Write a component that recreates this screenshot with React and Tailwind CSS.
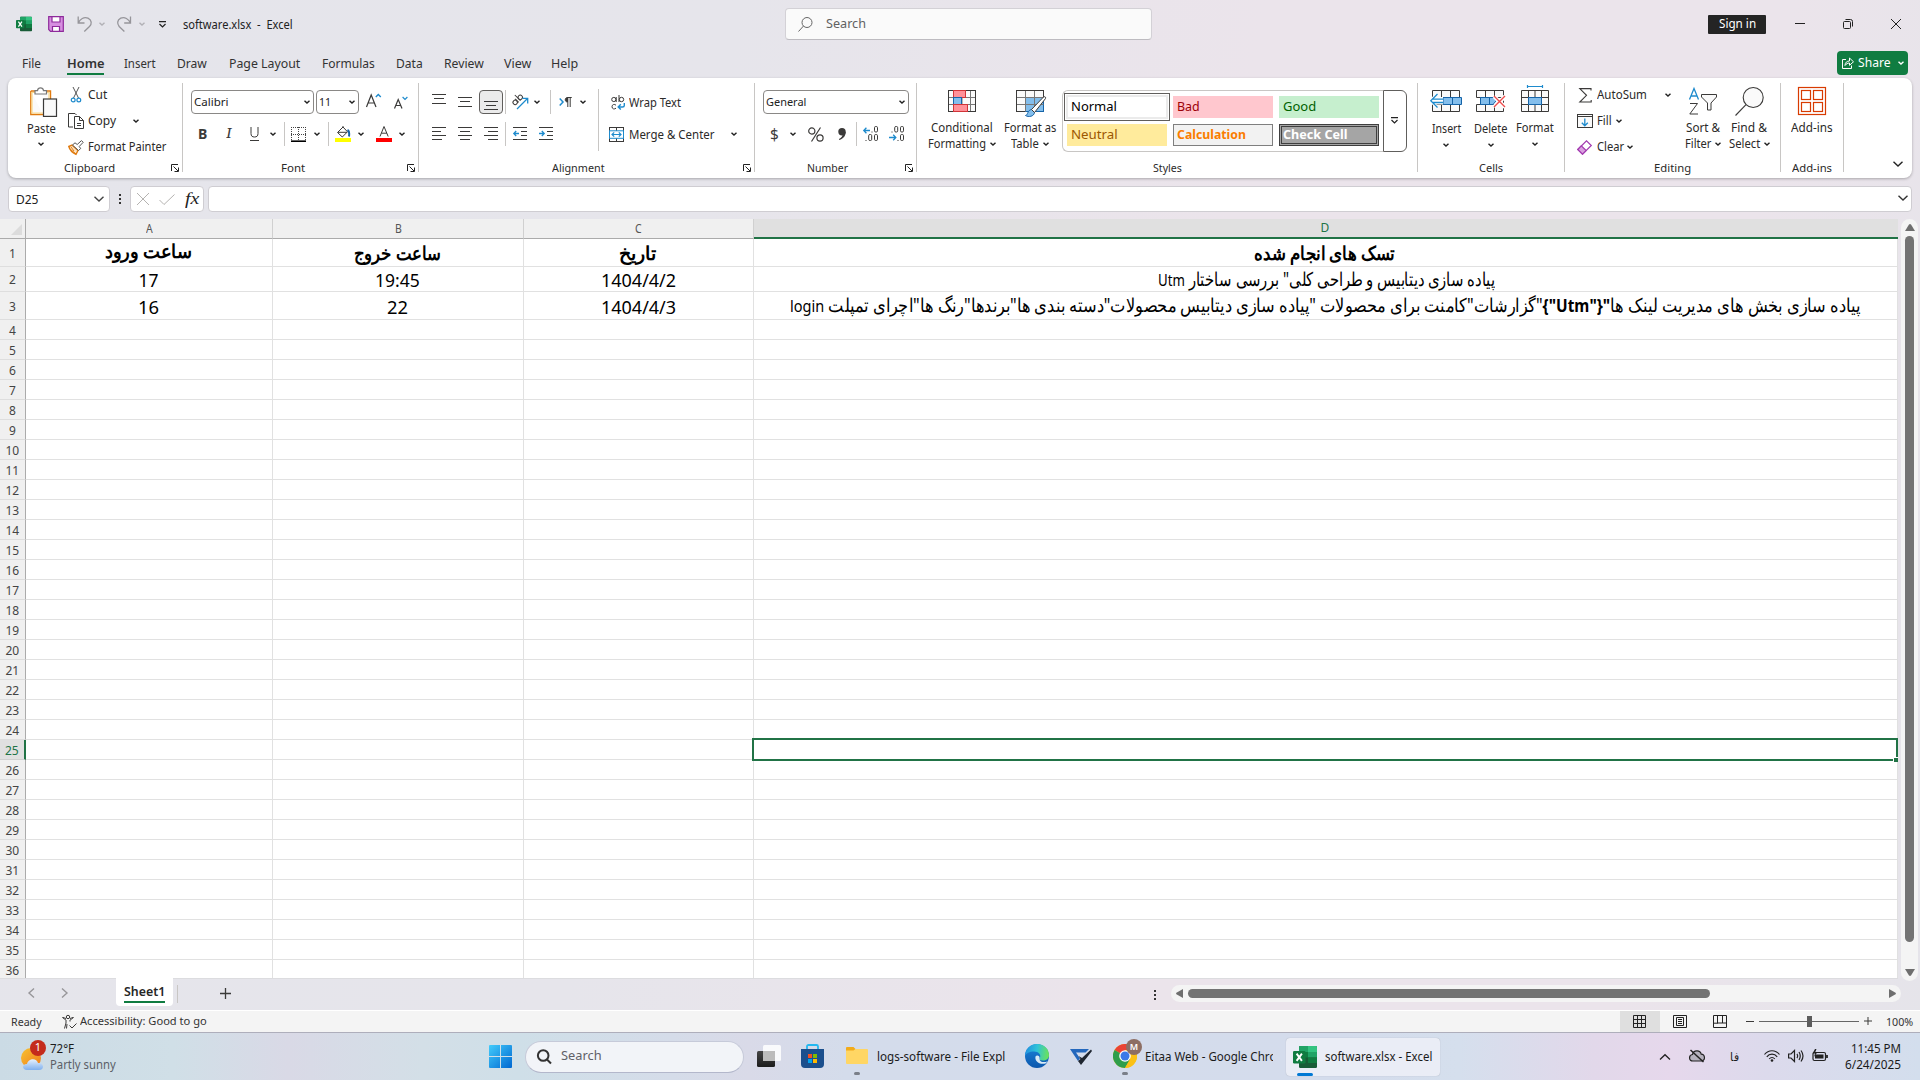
import React, { useLayoutEffect, useRef, useState } from "react";

/* Single line of text, condensed or widened to the width it is given. */
function T({ w, className = "", dir = "ltr", children }) {
  const ref = useRef(null);
  const [scale, setScale] = useState(1);
  useLayoutEffect(() => {
    const n = ref.current.offsetWidth;
    if (n) setScale(w / n);
  }, [w]);
  return (
    <span className={"inline-block shrink-0 text-left whitespace-nowrap " + className} style={{ width: w }}>
      <span ref={ref} dir={dir} className="inline-block origin-left whitespace-nowrap" style={{ transform: `scaleX(${scale})` }}>
        {children}
      </span>
    </span>
  );
}

function I({ w, h, className = "", children, stroke = "#3b3a39", sw = 1 }) {
  return (
    <svg width={w} height={h} viewBox={`0 0 ${w} ${h}`} fill="none" stroke={stroke} strokeWidth={sw} className={"block shrink-0 overflow-visible " + className}>
      {children}
    </svg>
  );
}

const Ch = ({ className = "", stroke = "#222", w = 6 }) => (
  <I w={w} h={w / 2 + 1} stroke={stroke} sw={1.4} className={className}>
    <path d={`M0.5 0.7 L${w / 2} ${w / 2} L${w - 0.5} 0.7`} />
  </I>
);

const Div = ({ className = "" }) => <span className={"block w-px shrink-0 bg-[#c8c6c4] " + className} />;

function Group({ className, label, lw, launcher, gap = "", children }) {
  return (
    <div className={"flex h-full shrink-0 items-start pt-[5px] " + className}>
      <div className="flex h-[95px] min-w-0 flex-1 flex-col">
        <div className="flex h-[76px] items-start">{children}</div>
        <div className="flex h-[18px] items-center">
          <div className="flex flex-1 justify-center text-[11px] text-[#2b2a29]">
            <T w={lw}>{label}</T>
          </div>
          {launcher && (
            <I w={8} h={8} className={"mr-[3px] " + gap} stroke="#222">
              <path d="M0.5 7V0.5H7M2.5 2.5L7 7M7.5 3.5V7.5H3.5" />
            </I>
          )}
        </div>
      </div>
      <Div className="h-[89px]" />
    </div>
  );
}

function ExcelIcon({ s, className = "" }) {
  return (
    <svg width={s} height={s} viewBox="0 0 24 24" className={"block shrink-0 " + className}>
      <rect x="6" y="1" width="18" height="22" rx="1.2" fill="#185c37" />
      <path d="M6 2.2Q6 1 7.2 1H15V7H6Z" fill="#21a366" />
      <path d="M15 1H22.8Q24 1 24 2.2V7H15Z" fill="#33c481" />
      <rect x="6" y="7" width="9" height="5.5" fill="#107c41" />
      <rect x="15" y="7" width="9" height="5.5" fill="#21a366" />
      <rect x="15" y="12.5" width="9" height="5.5" fill="#107c41" />
      <rect x="0" y="6" width="12.5" height="12.5" rx="1.2" fill="#107c41" />
      <path d="M3.6 8.6L8.9 15.9M8.9 8.6L3.6 15.9" stroke="#fff" strokeWidth="1.9" />
    </svg>
  );
}

function TitleBar() {
  return (
    <header className="flex h-[48px] items-center">
      <ExcelIcon s={16} className="ml-4" />
      <I w={16} h={16} stroke="#8e2a9b" sw={1.2} className="ml-4">
        <path d="M0.7 0.7H15.3V15.3H2.5L0.7 13.5Z" fill="#d68fe0" />
        <path d="M4 0.7V6H12V0.7Z" fill="#fff" />
        <path d="M4.5 15.3V10.5H11.5V15.3Z" fill="#fff" />
      </I>
      <I w={15} h={16} stroke="#96959a" sw={1.3} className="ml-[13px]">
        <path d="M1.2 0.5V7H7.5M1.2 7C3 3 7 0.5 11 2.2C15 4.2 15 8 12.5 10.5L7.3 15.5" />
      </I>
      <Ch stroke="#b2b1b6" className="ml-[7px]" />
      <I w={15} h={16} stroke="#96959a" sw={1.3} className="ml-[12px]">
        <path d="M13.5 0.5V7H7.2M13.5 7C11.7 3 7.7 0.5 3.7 2.2C-0.3 4.2 0.2 8 2.2 10.5L7.4 15.5" />
      </I>
      <Ch stroke="#b2b1b6" className="ml-[7px]" />
      <I w={7} h={7} stroke="#222" sw={1.2} className="ml-[14px]">
        <path d="M0 0.6H7M0.5 3L3.5 6L6.5 3" />
      </I>
      <T w={110} className="ml-[17px] pt-px text-[12px] text-[#222]">software.xlsx&nbsp; -&nbsp; Excel</T>
      <div className="ml-[492px] flex h-[32px] w-[367px] items-center rounded border border-[#d3d1d6] border-b-[#bdbbc0] bg-[#fafafa]">
        <I w={15} h={15} className="ml-[12px]" stroke="#666">
          <circle cx="9" cy="5.5" r="5" />
          <path d="M5.5 9L0.5 14.5" />
        </I>
        <T w={40} className="ml-[13px] text-[12px] text-[#616161]">Search</T>
      </div>
      <div className="ml-[556px] flex h-[19px] w-[58px] items-center justify-center rounded-[1px] bg-[#242424] text-[12px] text-white">
        <T w={37}>Sign in</T>
      </div>
      <I w={10} h={10} className="ml-[29px]" stroke="#222"><path d="M0 4.5H10" /></I>
      <I w={10} h={10} className="ml-[38px]" stroke="#222">
        <rect x="0.5" y="2.5" width="7" height="7" rx="1" />
        <path d="M2.5 0.5H7.5Q9.5 0.5 9.5 2.5V7.5" />
      </I>
      <I w={10} h={10} className="ml-[38px]" stroke="#222"><path d="M0 0L10 10M10 0L0 10" /></I>
    </header>
  );
}

const tabs = [
  ["File", 19, "ml-[22px]"],
  ["Home", 37, "ml-[26px]"],
  ["Insert", 32, "ml-[20px]"],
  ["Draw", 30, "ml-[21px]"],
  ["Page Layout", 71, "ml-[22px]"],
  ["Formulas", 53, "ml-[22px]"],
  ["Data", 27, "ml-[21px]"],
  ["Review", 40, "ml-[21px]"],
  ["View", 27, "ml-[20px]"],
  ["Help", 27, "ml-[20px]"],
];

function TabBar() {
  return (
    <nav className="flex h-[30px] items-start pt-px">
      {tabs.map(([name, w, ml]) =>
        name === "Home" ? (
          <div key={name} className={"mt-[5px] h-[21px] border-b-2 border-[#107c41] text-[12.5px] leading-[19px] font-semibold text-[#333] " + ml}>
            <T w={w}>{name}</T>
          </div>
        ) : (
          <div key={name} className={"mt-[5px] text-[12.5px] leading-[19px] text-[#333] " + ml}>
            <T w={w}>{name}</T>
          </div>
        )
      )}
      <div className="mt-[2px] mr-[12px] ml-auto flex h-[24px] w-[71px] items-center rounded bg-[#107c41] text-[12.5px] text-white">
        <I w={12} h={12} stroke="#fff" className="ml-[5px]">
          <path d="M4 2.5H0.5V11.5H9.5V8.5M3 8.5C3 5.5 5 4 7.5 4V1L11.5 4.8L7.5 8.3V6C5.5 6 4.3 6.8 3 8.5Z" />
        </I>
        <T w={33} className="ml-[4px]">Share</T>
        <Ch stroke="#fff" className="ml-[7px]" />
      </div>
    </nav>
  );
}

const Lines = ({ rows, className = "" }) => (
  <I w={14} h={16} className={className}>
    {rows.map(([y, a, b]) => <path key={y} d={`M${a} ${y + 0.5}H${b}`} />)}
  </I>
);

const BigButton = ({ className, icon, lines }) => (
  <div className={"flex shrink-0 flex-col items-center text-[12px] leading-[16px] text-[#2b2a29] " + className}>
    <div className="flex h-[34px] items-start">{icon}</div>
    {lines}
  </div>
);

const Combo = ({ className, w, children }) => (
  <div className={"flex h-[24px] shrink-0 items-center justify-between rounded border border-[#8a8886] bg-white pr-[3px] pl-[2px] text-[11.5px] text-[#222] " + className}>
    <T w={w}>{children}</T>
    <Ch />
  </div>
);

function Clipboard() {
  return (
    <Group className="w-[175px]" label="Clipboard" lw={51} launcher>
      <BigButton
        className="ml-[17px] w-[32px] pt-1"
        icon={
          <I w={27} h={30} className="ml-1" sw={1.2}>
            <path d="M0.8 4H20.5V12M0.8 4V27.5H13" stroke="#e07b10" strokeWidth="1.4" fill="#fafafa" />
            <path d="M2 5.5H19V26H2Z" stroke="#fbd98b" />
            <path d="M5 7V3.6H7.5C8 0 13 0 13.5 3.6H16.5V7Z" fill="#fff" stroke="#777" />
            <rect x="13.5" y="12" width="13" height="17.4" fill="#fafafa" />
          </I>
        }
        lines={<><T w={29}>Paste</T><Ch className="mt-[5px]" /></>}
      />
      <div className="ml-[11px] flex flex-col text-[12px] text-[#2b2a29]">
        <div className="flex h-[24px] items-center">
          <I w={10} h={16} className="ml-[3px]">
            <path d="M2 0L7.5 11M8 0L2.5 11" stroke="#555" />
            <circle cx="2.2" cy="13" r="1.9" stroke="#1e8bcd" strokeWidth="1.2" />
            <circle cx="7.8" cy="13" r="1.9" stroke="#1e8bcd" strokeWidth="1.2" />
          </I>
          <T w={19} className="ml-[7px]">Cut</T>
        </div>
        <div className="flex h-[27px] items-center">
          <I w={16} h={16}>
            <path d="M5 14H0.5V0.5H7L8.5 2M6.5 3.5H11.5L15.5 7.5V15.5H6.5ZM11.5 3.5V7.5H15.5M9 10.5H13M9 12.5H13" />
          </I>
          <T w={28} className="ml-[4px]">Copy</T>
          <Ch className="ml-[17px]" />
        </div>
        <div className="flex h-[26px] items-center">
          <I w={16} h={15}>
            <path d="M0.8 6.5L4 5L10 10.5L8 14.3C5 13 2 10.5 0.8 6.5Z" fill="#fde5c4" stroke="#e07b10" strokeWidth="1.4" />
            <path d="M2 9L8 14M3 7L6 11" stroke="#e07b10" />
            <path d="M4.5 5L7 2.8L9.2 4.5L13.5 0.6L15.2 2.3L11.2 6.5L12.7 8.5L10.5 10.5Z" fill="#fff" stroke="#555" />
          </I>
          <T w={78} className="ml-[4px]">Format Painter</T>
        </div>
      </div>
    </Group>
  );
}

function Font() {
  return (
    <Group className="w-[236px]" label="Font" lw={24} launcher gap="ml-[5px]">
      <div className="flex flex-col pt-[7px]">
        <div className="flex h-[24px] items-center">
          <Combo className="ml-[8px] w-[123px]" w={34}>Calibri</Combo>
          <Combo className="ml-[2px] w-[43px]" w={12}>11</Combo>
          <I w={15} h={15} className="-mt-[3px] ml-[7px]" sw={1.2}>
            <path d="M0.5 14L5.2 2L10 14M2.2 10H8.2" />
            <path d="M9.8 4L12.3 1.5L14.8 4" stroke="#1e8bcd" strokeWidth="1.4" />
          </I>
          <I w={14} h={13} className="ml-[13px]" sw={1.2}>
            <path d="M0.5 12.5L4.2 3.5L8 12.5M1.8 9.5H6.6" />
            <path d="M8.6 1L11 3.4L13.4 1" stroke="#1e8bcd" />
          </I>
        </div>
        <div className="mt-[8px] flex h-[24px] items-center text-[14px] text-[#3b3a39]">
          <T w={9} className="-mt-px ml-[15px] font-bold">B</T>
          <T w={6} className="-mt-px ml-[19px] font-serif italic">I</T>
          <I w={9} h={14} className="ml-[18px]"><path d="M1 0V6.5C1 9 2.2 10 4.5 10S8 9 8 6.5V0M0 13.5H9" /></I>
          <Ch className="ml-[11px]" />
          <Div className="ml-[8px] h-[24px]" />
          <I w={15} h={15} className="ml-[6px]" stroke="#444">
            <path d="M0.5 0V13M14.5 0V13M7.5 0V13M0 0.5H15M0 7.5H15" strokeDasharray="1 1" />
            <path d="M0 14.2H15" strokeWidth="1.6" stroke="#000" />
          </I>
          <Ch className="ml-[8px]" />
          <Div className="ml-[8px] h-[24px]" />
          <I w={16} h={16} className="ml-[6px]">
            <path d="M2.5 6.5L8 1L12.5 5.8L7.3 11L2.5 6.5ZM8 1V0M3 6.3H12" />
            <path d="M12.5 4C14.5 5 14.5 7 14 10.5" stroke="#1664a8" strokeWidth="2" />
            <rect x="0" y="12" width="16" height="4" fill="#ff0" stroke="none" />
          </I>
          <Ch className="ml-[7px]" />
          <I w={16} h={16} className="ml-[12px]">
            <path d="M4 10.5L8 0.5L12.2 10.5M5.5 7.2H10.8" />
            <rect x="0" y="12" width="16" height="4" fill="#f00" stroke="none" />
          </I>
          <Ch className="ml-[7px]" />
        </div>
      </div>
    </Group>
  );
}

function Alignment() {
  return (
    <Group className="w-[336px]" label="Alignment" lw={53} launcher gap="ml-[5px]">
      <div className="flex w-[179px] flex-col pt-[7px]">
        <div className="flex h-[24px] items-center">
          <Lines className="ml-[13px]" rows={[[0, 0, 14], [4, 2, 12], [9, 0, 14]]} />
          <Lines className="ml-[12px]" rows={[[3, 0, 14], [7, 2, 12], [12, 0, 14]]} />
          <div className="ml-[7px] flex h-[24px] w-[24px] items-center justify-center rounded border border-[#605e5c] bg-[#ebebeb]">
            <Lines rows={[[7, 0, 14], [11, 2, 12], [15, 0, 14]]} />
          </div>
          <Div className="ml-[2px] h-[24px]" />
          <I w={17} h={16} className="ml-[6px]">
            <g transform="rotate(-45 6 7)">
              <circle cx="3" cy="6" r="2.2" /><path d="M5.5 3.5V8.5M8 0.5V8.5" /><circle cx="10.2" cy="6" r="2.2" />
            </g>
            <path d="M5 15L15.5 4.5M10.5 4.3H15.7V9.5" stroke="#1e8bcd" strokeWidth="1.3" />
          </I>
          <Ch className="ml-[5px]" />
          <Div className="ml-[10px] h-[24px]" />
          <I w={13} h={10} className="ml-[8px]">
            <path d="M0.7 1.5L4 5L0.7 8.5" stroke="#1e8bcd" strokeWidth="1.5" />
            <path d="M12.5 0.5H8.5C5.5 0.5 5.5 5 8.5 5V0.5Z" fill="#3b3a39" /><path d="M8.8 0.5V10M11.2 0.5V10" />
          </I>
          <Ch className="ml-[8px]" />
        </div>
        <div className="mt-[8px] flex h-[24px] items-center">
          <Lines className="ml-[13px]" rows={[[1, 0, 14], [5, 0, 9], [9, 0, 14], [13, 0, 10]]} />
          <Lines className="ml-[12px]" rows={[[1, 0, 14], [5, 2, 12], [9, 0, 14], [13, 2, 12]]} />
          <Lines className="ml-[12px]" rows={[[1, 0, 14], [5, 4, 14], [9, 0, 14], [13, 4, 14]]} />
          <Div className="ml-[7px] h-[24px]" />
          <I w={14} h={16} className="ml-[7px]">
            <path d="M0 1.5H14M8 5.5H14M8 9.5H14M0 13.5H14" />
            <path d="M6 7.5H0.8M3.2 5L0.8 7.5L3.2 10" stroke="#1e8bcd" strokeWidth="1.3" />
          </I>
          <I w={14} h={16} className="ml-[12px]">
            <path d="M0 1.5H14M8 5.5H14M8 9.5H14M0 13.5H14" />
            <path d="M0 7.5H5.2M2.8 5L5.2 7.5L2.8 10" stroke="#1e8bcd" strokeWidth="1.3" />
          </I>
        </div>
      </div>
      <Div className="mt-[6px] h-[62px]" />
      <div className="flex flex-col pt-[7px] text-[12px] text-[#2b2a29]">
        <div className="flex h-[24px] items-center">
          <I w={14} h={15} className="ml-[12px]">
            <circle cx="2.8" cy="4.5" r="2.1" /><path d="M5.2 2V7M8 0V7" /><circle cx="10.5" cy="4.5" r="2.2" />
            <path d="M5 10.2C3.5 8.8 1 9.3 1 11.7S3.5 14.5 5 13.2" />
            <path d="M13.3 8V10.5Q13.3 12 11.5 12H7.2M9.8 9.3L7.2 12L9.8 14.5" stroke="#1e8bcd" strokeWidth="1.4" />
          </I>
          <T w={52} className="ml-[4px] pt-[2px]">Wrap Text</T>
        </div>
        <div className="mt-[8px] flex h-[24px] items-center">
          <I w={15} h={15} className="ml-[10px]">
            <rect x="0.5" y="0.5" width="14" height="14" /><path d="M7.5 0V4M7.5 11V15" />
            <rect x="0.5" y="3.8" width="14" height="7.5" stroke="#1e8bcd" fill="#fff" />
            <path d="M3 7.5H12M5.2 5.3L3 7.5L5.2 9.7M9.8 5.3L12 7.5L9.8 9.7" stroke="#1e8bcd" strokeWidth="1.2" />
          </I>
          <T w={86} className="ml-[5px] pt-[2px]">Merge &amp; Center</T>
          <Ch className="ml-[16px]" />
        </div>
      </div>
    </Group>
  );
}

function NumberGroup() {
  return (
    <Group className="w-[162px]" label="Number" lw={41} launcher gap="ml-[5px]">
      <div className="flex flex-col pt-[7px]">
        <Combo className="ml-[8px] w-[146px]" w={40}>General</Combo>
        <div className="mt-[8px] flex h-[24px] items-center text-[16px] text-[#3b3a39]">
          <T w={9} className="-mt-px ml-[15px] text-[17px]">$</T>
          <Ch className="ml-[11px]" />
          <I w={16} h={15} className="ml-[12px]" sw={1.2}>
            <circle cx="3.8" cy="4" r="3.1" /><circle cx="12" cy="11" r="3.1" /><path d="M12.5 0.5L3.5 14.5" />
          </I>
          <I w={8} h={12} className="ml-[14px]" stroke="none">
            <circle cx="4" cy="3.7" r="3.7" fill="#3b3a39" /><path d="M7.7 3.5C7.8 8 5.5 10.5 1.2 12L1 11C3.5 9.8 4.8 8 4.6 6Z" fill="#3b3a39" />
          </I>
          <Div className="ml-[10px] h-[24px]" />
          <I w={15} h={15} className="-mt-px ml-[6px]">
            <path d="M7 4.5H0.8M3.4 1.8L0.8 4.5L3.4 7.2" stroke="#1e8bcd" strokeWidth="1.3" />
            <rect x="11.5" y="0.5" width="3" height="5.5" rx="1.2" /><rect x="5.7" y="8.5" width="3" height="6" rx="1.2" /><rect x="11.5" y="8.5" width="3" height="6" rx="1.2" />
            <path d="M8.5 6H9.5M2.5 14.5H3.5" />
          </I>
          <I w={15} h={15} className="-mt-px ml-[11px]">
            <path d="M0 11.5H6.8M4.2 8.8L6.8 11.5L4.2 14.2" stroke="#1e8bcd" strokeWidth="1.3" />
            <rect x="5.7" y="0.5" width="3" height="5.5" rx="1.2" /><rect x="11.5" y="0.5" width="3" height="5.5" rx="1.2" /><rect x="11.5" y="8.5" width="3" height="6" rx="1.2" />
            <path d="M2.5 6H3.5M8.5 14.5H9.5" />
          </I>
        </div>
      </div>
    </Group>
  );
}

const swatch = "flex h-[22px] w-[100px] shrink-0 items-center pl-[4px] text-[13px] ";

function Styles() {
  return (
    <Group className="w-[501px]" label="Styles" lw={29}>
      <BigButton
        className="ml-[8px] w-[74px] pt-[7px]"
        icon={
          <I w={28} h={22}>
            <rect x="0.5" y="0.5" width="27" height="21" fill="#fafafa" />
            <path d="M5.5 0V22M22.5 0V22M0 7.5H28M0 14.5H28M14 7V14" stroke="#777" />
            <rect x="0.5" y="0.5" width="27" height="21" />
            <rect x="5.5" y="0.5" width="12" height="7" fill="#ff9199" stroke="#d13438" />
            <rect x="5.5" y="7.5" width="8" height="7" fill="#83beec" stroke="#1664a8" />
            <rect x="5.5" y="14.5" width="14" height="7" fill="#ff9199" stroke="#d13438" />
          </I>
        }
        lines={
          <div className="-mt-[4px] flex flex-col items-center">
            <T w={62}>Conditional</T>
            <span className="flex items-center"><T w={58}>Formatting</T><Ch className="ml-[4px]" /></span>
          </div>
        }
      />
      <BigButton
        className="ml-[4px] w-[54px] pt-[7px]"
        icon={
          <I w={30} h={27} className="ml-[2px]">
            <rect x="0.5" y="0.5" width="27" height="21" fill="#fafafa" />
            <rect x="9.5" y="7.5" width="18" height="14" fill="#83beec" stroke="#1664a8" />
            <path d="M9.5 0.5V21.5M18.5 0.5V21.5M0.5 7.5H27.5M0.5 14.5H27.5" stroke="#777" />
            <path d="M27.5 5V0.5H0.5V21.5H9" />
            <path d="M9.5 25.5C12 25 11.5 20 15.5 19.5L18.5 22.5C18 26.5 12.5 27.5 9.5 25.5Z" fill="#83beec" stroke="#1664a8" />
            <path d="M15.5 19.5L27.5 7C29 6 30.2 7.5 29.4 8.7L18.5 22.5Z" fill="#fff" />
          </I>
        }
        lines={
          <div className="-mt-[4px] flex flex-col items-center">
            <T w={52}>Format as</T>
            <span className="flex items-center"><T w={28}>Table</T><Ch className="ml-[4px]" /></span>
          </div>
        }
      />
      <div className="mt-[7px] ml-[5px] flex h-[62px] w-[346px] shrink-0">
        <div className="flex w-[321px] flex-col rounded-l-md border border-r-0 border-[#c8c6c4] pt-[2px] pl-px">
          <div className="flex items-center">
            <div className="flex h-[28px] w-[106px] shrink-0 items-center border border-[#605e5c] p-px text-[13px] text-black">
              <div className="flex h-full w-full items-center border-2 border-[#ebebeb] pl-[3px]"><T w={46}>Normal</T></div>
            </div>
            <div className={swatch + "ml-[3px] bg-[#ffc7ce] text-[#9c0006]"}><T w={23}>Bad</T></div>
            <div className={swatch + "ml-[6px] bg-[#c6efce] text-[#006100]"}><T w={33}>Good</T></div>
          </div>
          <div className="mt-[3px] ml-[3px] flex items-center">
            <div className={swatch + "bg-[#ffeb9c] text-[#9c5700]"}><T w={47}>Neutral</T></div>
            <div className={swatch + "ml-[6px] border border-[#7f7f7f] bg-[#f2f2f2] !pl-[3px] font-bold text-[#fa7d00]"}><T w={69}>Calculation</T></div>
            <div className="ml-[6px] h-[22px] w-[100px] border border-[#3f3f3f] bg-[#a5a5a5] p-px">
              <div className="flex h-full items-center border border-[#3f3f3f] pl-[1px] text-[13px] font-bold text-white"><T w={65}>Check Cell</T></div>
            </div>
          </div>
        </div>
        <div className="flex w-[24px] items-center justify-center rounded-r-md border border-[#605e5c]">
          <I w={7} h={7} stroke="#222" sw={1.2} className="-mt-px -ml-px"><path d="M0 0.6H7M0.5 3L3.5 6L6.5 3" /></I>
        </div>
      </div>
    </Group>
  );
}

function Cells() {
  return (
    <Group className="w-[147px]" label="Cells" lw={24}>
      <BigButton
        className="ml-[9px] w-[38px] pt-[7px]"
        icon={
          <I w={32} h={22}>
            <path d="M2.5 0.5H29.5V21.5H2.5ZM2.5 7.5H29.5M2.5 14.5H29.5M11.5 0.5V21.5M20.5 0.5V21.5" fill="#fafafa" />
            <path d="M13 7.5H31.5V14.5H13ZM22.5 7.5V14.5" fill="#83beec" stroke="#1664a8" />
            <path d="M7 4L0.8 10.8L7 17.5M1 10.8H13M4 8.5H13M4 13H13" stroke="#fff" strokeWidth="3" />
            <path d="M7.5 4L0.8 10.8L7.5 17.5M3 9.2H13M3 12.5H13" stroke="#1e8bcd" strokeWidth="1.3" />
          </I>
        }
        lines={<><T w={29} className="-mt-[3px]">Insert</T><Ch className="mt-[6px]" /></>}
      />
      <BigButton
        className="ml-[7px] w-[38px] pt-[7px]"
        icon={
          <I w={30} h={22}>
            <path d="M0.5 0.5H27.5V21.5H0.5V14.5H18M0.5 0.5V7.5H27.5M9.5 0.5V7M18.5 0.5V7M9.5 15V21.5M18.5 15V21.5" fill="#fafafa" />
            <path d="M4.5 7.5H17L20 11L17 14.5H4.5ZM13.5 7.5V14.5" fill="#83beec" stroke="#1664a8" />
            <path d="M18 6.5L29 17M29 6.5L18 17" stroke="#fff" strokeWidth="4" />
            <path d="M18 6L29 17M29 6L18 17" stroke="#ee4b4b" strokeWidth="1.4" />
          </I>
        }
        lines={<><T w={34} className="-mt-[3px]">Delete</T><Ch className="mt-[6px]" /></>}
      />
      <BigButton
        className="ml-[6px] w-[38px] pt-[2px]"
        icon={
          <I w={28} h={27}>
            <path d="M6.5 0V3M21.5 0V3M6.5 1.5H21.5" stroke="#1e8bcd" strokeWidth="1.2" />
            <path d="M0.5 5.5H27.5V26.5H0.5ZM7.5 5.5V26.5M20.5 5.5V26.5M14 5.5V26M0.5 12.5H27.5M0.5 19.5H27.5" fill="#fafafa" />
            <rect x="7.5" y="12.5" width="13" height="7" fill="#83beec" stroke="#1664a8" />
          </I>
        }
        lines={<><T w={38} className="mt-px">Format</T><Ch className="mt-[6px]" /></>}
      />
    </Group>
  );
}

function Editing() {
  return (
    <Group className="w-[216px]" label="Editing" lw={37}>
      <div className="ml-[12px] flex w-[96px] shrink-0 flex-col text-[12px] text-[#2b2a29]">
        <div className="flex h-[24px] items-center">
          <I w={13} h={15} className="ml-[2px]" sw={1.1}><path d="M12 2.5V0.6H0.8L7.5 7.3L0.8 14H12.2V12" /></I>
          <T w={50} className="ml-[5px]">AutoSum</T>
          <Ch className="ml-[18px]" />
        </div>
        <div className="flex h-[27px] items-center">
          <I w={16} h={14}>
            <rect x="0.5" y="0.5" width="15" height="13" fill="#fafafa" /><path d="M0.5 2.5H15.5" />
            <path d="M7.8 4.5V11.5M4.8 8.8L7.8 11.8L10.8 8.8" stroke="#1e8bcd" strokeWidth="1.3" />
          </I>
          <T w={15} className="ml-[4px]">Fill</T>
          <Ch className="ml-[4px]" />
        </div>
        <div className="flex h-[26px] items-center">
          <I w={15} h={15} stroke="#a33bb0" sw={1.2}>
            <path d="M0.8 9.5L9.5 0.8L14.3 5.5L5.5 14.2Z" fill="#fff" /><path d="M0.8 9.5L4.3 5.8L9.2 10.5L5.5 14.2Z" fill="#d9a0df" />
          </I>
          <T w={27} className="ml-[5px]">Clear</T>
          <Ch className="ml-[3px]" />
        </div>
      </div>
      <BigButton
        className="ml-[11px] w-[38px] pt-[5px]"
        icon={
          <I w={28} h={27}>
            <path d="M0.5 11.5L5 0.5L9.5 11.5M2.2 8H8" stroke="#1e8bcd" strokeWidth="1.3" />
            <path d="M1 15.5H8.5L0.8 26H9" />
            <path d="M12.5 6.5H27.5V9L22 15V22H18.5V15L12.5 9Z" fill="#fafafa" />
          </I>
        }
        lines={
          <div className="-mt-[2px] flex flex-col items-center">
            <T w={34}>Sort &amp;</T>
            <span className="flex items-center"><T w={26}>Filter</T><Ch className="ml-[4px]" /></span>
          </div>
        }
      />
      <BigButton
        className="ml-[6px] w-[42px] pt-[4px]"
        icon={
          <I w={29} h={29} sw={1.1}><circle cx="18.2" cy="10.5" r="10" fill="#fafafa" /><path d="M11 17.7L0.5 28.5" /></I>
        }
        lines={
          <div className="-mt-px flex flex-col items-center">
            <T w={36}>Find &amp;</T>
            <span className="flex items-center"><T w={31}>Select</T><Ch className="ml-[4px]" /></span>
          </div>
        }
      />
    </Group>
  );
}

function AddIns() {
  return (
    <Group className="w-[63px]" label="Add-ins" lw={40}>
      <BigButton
        className="ml-[8px] w-[46px] pt-[4px]"
        icon={
          <I w={28} h={28} stroke="#d83b01" sw={1.2}>
            <rect x="0.5" y="0.5" width="27" height="27" />
            <rect x="3.5" y="3.5" width="9" height="9" /><rect x="15.5" y="3.5" width="9" height="9" /><rect x="3.5" y="15.5" width="9" height="9" /><rect x="15.5" y="15.5" width="9" height="9" />
          </I>
        }
        lines={<T w={42} className="-mt-px">Add-ins</T>}
      />
    </Group>
  );
}

function Ribbon() {
  return (
    <section className="mx-2 flex h-[100px] items-start rounded-lg bg-white shadow-[0_1px_3px_rgba(0,0,0,0.28)]">
      <Clipboard />
      <Font />
      <Alignment />
      <NumberGroup />
      <Styles />
      <Cells />
      <Editing />
      <AddIns />
      <Ch w={10} className="mt-[83px] ml-[49px]" />
    </section>
  );
}

const bar = "flex h-full items-center rounded border border-[#cfcdd2] bg-white ";

function FormulaBar() {
  return (
    <section className="mx-2 mt-2 flex h-[26px] items-center">
      <div className={bar + "w-[102px] justify-between pr-[5px] pl-[7px] text-[12px] text-[#222]"}>
        <T w={23} className="pt-px">D25</T>
        <Ch w={10} stroke="#444" />
      </div>
      <I w={3} h={11} className="ml-[9px]" stroke="none">
        <path d="M0 0H2V2H0ZM0 4H2V6H0ZM0 8H2V10H0Z" fill="#333" />
      </I>
      <div className={bar + "ml-[8px] w-[74px]"}>
        <I w={12} h={12} className="ml-[6px]" stroke="#b5b3b1"><path d="M0 0L12 12M12 0L0 12" /></I>
        <I w={16} h={11} className="ml-[10px]" stroke="#b5b3b1"><path d="M0.5 6L5 10.5L15.5 0.5" /></I>
        <T w={14} className="-mt-px ml-[10px] font-['Liberation_Serif'] text-[17px] leading-[20px] text-[#222] italic">fx</T>
      </div>
      <div className={bar + "ml-[4px] flex-1 justify-end pr-[3px]"}>
        <Ch w={10} stroke="#333" className="-mt-[3px]" />
      </div>
    </section>
  );
}

const cols = "grid grid-cols-[26px_247px_251px_230px_1144px]";
const cell = "flex items-center justify-center border-r border-b border-[#e1e1e1] bg-white ";

function RowHead({ n, active }) {
  return (
    <div className={active
      ? "flex items-center justify-center border-r-2 border-b border-[#217346] border-b-[#d0d0d0] bg-[#e0e0e0] text-[12px] leading-none text-[#217346]"
      : "flex items-center justify-center border-r border-b border-r-[#ababab] border-b-[#dedede] bg-[#f0f0f0] text-[12px] leading-none text-[#444]"}>
      <span className="pt-[2px]"><T w={n > 9 ? 14 : 7}>{n}</T></span>
    </div>
  );
}

const rest = Array.from({ length: 33 }, (_, i) => i + 4);
const txt = "pt-[2px] pr-px text-[17.5px] leading-[22px] text-black ";
const fa = "pr-[2px] text-[19px] leading-[22px] text-black ";

function Sheet() {
  return (
    <section className="flex h-[760px] shrink-0 bg-transparent">
      <div className="flex h-[760px] w-[1898px] shrink-0 flex-col overflow-hidden border-b border-[#dcdcdf]">
        <div className={cols + " h-[20px] shrink-0 text-[12px] text-[#555]"}>
          <div className="flex items-end justify-end border-r border-b border-[#ababab] bg-[#f0f0f0] pr-[3px] pb-[3px]">
            <I w={11} h={11} stroke="none"><path d="M11 0V11H0Z" fill="#dcdcdc" /></I>
          </div>
          {["A", "B", "C"].map((c) => (
            <div key={c} className="flex items-center justify-center border-r border-b border-r-[#d0d0d0] border-b-[#ababab] bg-[#f0f0f0]"><T w={7}>{c}</T></div>
          ))}
          <div className="flex items-center justify-center border-b-2 border-[#217346] bg-[#e0e0e0] pr-[2px] text-[#217346]"><T w={9}>D</T></div>
        </div>
        <div className={cols + " h-[28px] shrink-0"}>
          <RowHead n={1} />
          <div className={cell + fa + "pb-[3px] font-semibold"}><T w={87} dir="rtl">ساعت ورود</T></div>
          <div className={cell + fa + "font-semibold"}><T w={87} dir="rtl">ساعت خروج</T></div>
          <div className={cell + fa + "font-semibold"}><T w={37} dir="rtl">تاریخ</T></div>
          <div className={cell + fa + "font-semibold"}><T w={141} dir="rtl">تسک های انجام شده</T></div>
        </div>
        <div className={cols + " h-[25px] shrink-0"}>
          <RowHead n={2} />
          <div className={cell + txt}><T w={20}>17</T></div>
          <div className={cell + txt}><T w={45}>19:45</T></div>
          <div className={cell + txt}><T w={75}>1404/4/2</T></div>
          <div className={cell + fa}><T w={337} dir="rtl" className="ml-[3px]">پیاده سازی دیتابیس و طراحی کلی" بررسی ساختار <span className="text-[17px]">Utm</span></T></div>
        </div>
        <div className={cols + " h-[28px] shrink-0"}>
          <RowHead n={3} />
          <div className={cell + txt}><T w={21}>16</T></div>
          <div className={cell + txt}><T w={21}>22</T></div>
          <div className={cell + txt}><T w={75}>1404/4/3</T></div>
          <div className={cell + fa + "pb-px"}>
            <T w={1070} dir="rtl">پیاده سازی بخش های مدیریت لینک ها<b className="text-[18px]">"{"{"}"Utm"{"}"}</b>"گزارشات"کامنت برای محصولات "پیاده سازی دیتابیس محصولات"دسته بندی ها"برندها"رنگ ها"اچرای تمپلت <span className="text-[17px]">login</span></T>
          </div>
        </div>
        {rest.map((n) => (
          <div key={n} className={cols + " h-[20px] shrink-0"}>
            <RowHead n={n} active={n === 25} />
            <div className={cell} />
            <div className={cell} />
            <div className={cell} />
            {n === 25 ? (
              <div className={cell + "relative z-10"}>
                <div className="absolute -top-[2px] right-[-1px] -bottom-[2px] left-[-2px] border-2 border-[#217346]">
                  <span className="absolute -right-[2px] -bottom-[3px] size-[5px] border-t border-l border-white bg-[#217346]" />
                </div>
              </div>
            ) : (
              <div className={cell} />
            )}
          </div>
        ))}
      </div>
      <div className="ml-[3px] flex h-[762px] w-[17px] shrink-0 flex-col items-center rounded-full bg-[#f4f4f4]">
        <I w={10} h={7} className="mt-[5px]" stroke="none"><path d="M4 0.5Q5 -0.4 6 0.5L10 7H0Z" fill="#6e6e6e" /></I>
        <div className="mt-[5px] h-[706px] w-[9px] rounded-full bg-[#737373]" />
        <I w={10} h={7} className="mt-[27px]" stroke="none"><path d="M4 6.5Q5 7.4 6 6.5L10 0H0Z" fill="#6e6e6e" /></I>
      </div>
    </section>
  );
}

function SheetTabs() {
  return (
    <section className="flex h-[31px] items-start">
      <I w={7} h={10} className="mt-[9px] ml-[28px]" stroke="#979699" sw={1.4}><path d="M6 0.5L1 5L6 9.5" /></I>
      <I w={7} h={10} className="mt-[9px] ml-[26px]" stroke="#979699" sw={1.4}><path d="M1 0.5L6 5L1 9.5" /></I>
      <div className="-mt-px ml-[48px] flex h-[28px] w-[57px] justify-center rounded-b bg-white">
        <div className="mt-[3px] h-[22px] border-b-2 border-[#107c41] text-[13px] leading-[20px] font-semibold text-[#262626]"><T w={41}>Sheet1</T></div>
      </div>
      <Div className="mt-[6px] ml-[4px] h-[18px]" />
      <I w={11} h={11} className="mt-[9px] ml-[42px]" sw={1.3}><path d="M5.5 0V11M0 5.5H11" /></I>
      <I w={3} h={11} className="mt-[11px] ml-[923px]" stroke="none"><path d="M0 0H2V2H0ZM0 4H2V6H0ZM0 8H2V10H0Z" fill="#333" /></I>
      <div className="mt-[6px] ml-[14px] flex h-[17px] w-[730px] items-center rounded-full bg-[#f4f4f4]">
        <I w={7} h={9} className="ml-[5px]" stroke="none"><path d="M0.4 3.7Q-0.3 4.5 0.4 5.3L7 9V0Z" fill="#6e6e6e" /></I>
        <div className="ml-[5px] h-[9px] w-[522px] rounded-full bg-[#737373]" />
        <I w={7} h={9} className="mr-[5px] ml-auto" stroke="none"><path d="M6.6 3.7Q7.3 4.5 6.6 5.3L0 9V0Z" fill="#6e6e6e" /></I>
      </div>
    </section>
  );
}

function StatusBar() {
  return (
    <section className="flex h-[23px] items-center border-t border-b border-t-white border-b-[#aeaebb] bg-[#f4f4f4] text-[11px] text-[#333]">
      <T w={31} className="ml-[11px] pt-px">Ready</T>
      <I w={15} h={14} className="ml-[20px]">
        <circle cx="6" cy="2" r="1.7" /><path d="M0.5 2C1 4 4 4.5 4 5V8L2.5 13.5M11.5 2C11 4 8 4.5 8 5V6.5M1 2.5L4 3.5M11 2.5L8 3.5M5 9L4.5 13.5" /><path d="M7.5 10.5L10 13L14.5 8.5" />
      </I>
      <T w={127} className="ml-[3px]">Accessibility: Good to go</T>
      <div className="ml-auto flex h-full w-[40px] items-center justify-center bg-[#dfdfdf]">
        <I w={13} h={13} stroke="#222" className="-mt-px -ml-px"><path d="M0.5 0.5H12.5V12.5H0.5ZM4.5 0.5V12.5M8.5 0.5V12.5M0.5 4.5H12.5M0.5 8.5H12.5" /></I>
      </div>
      <I w={14} h={13} stroke="#222" className="-mt-px ml-[13px]"><path d="M0.5 0.5H13.5V12.5H0.5ZM3.5 2.5H10.5V10.5H3.5ZM5 4.5H9M5 6.5H9M5 8.5H9" /></I>
      <I w={14} h={13} stroke="#222" className="-mt-px ml-[26px]"><path d="M0.5 0.5H13.5V12.5H0.5ZM4.5 0.5V8M9.5 0.5V8M4.5 8H13.5M0 8.2H5" /></I>
      <I w={8} h={9} className="-mt-px ml-[19px]"><path d="M0 4.5H8" /></I>
      <I w={100} h={11} className="ml-[5px]" stroke="#666"><path d="M0 5.5H100" /><rect x="48" y="0" width="5" height="11" fill="#5c5c5c" stroke="none" /></I>
      <I w={8} h={8} className="-mt-px ml-[5px]"><path d="M0 4H8M4 0V8" /></I>
      <T w={27} className="mr-[7px] ml-[14px] text-[11.5px]">100%</T>
    </section>
  );
}

function Taskbar() {
  return (
    <footer className="flex h-[47px] items-center bg-[linear-gradient(90deg,#cbdbe5_0%,#d0dfe7_9%,#d9d9e6_15%,#d3dfe7_22%,#cfdfe8_27%,#d5dce9_35%,#d9dae8_39%,#d4dceb_44%,#d4dcec_70%,#d5dfed_76%,#e2d8ea_83%,#e6d8ec_87%,#dcdaec_92%,#d3deed_100%)] text-[12px] text-[#1b1b1b]">
      <div className="relative -mt-[3px] ml-[21px] h-[29px] w-[25px]">
        <I w={25} h={29} stroke="none">
          <defs>
            <linearGradient id="sun" x1="0" y1="0" x2="1" y2="1"><stop offset="0" stopColor="#f7c331" /><stop offset="1" stopColor="#f07a1c" /></linearGradient>
            <linearGradient id="cloud" x1="0" y1="0" x2="0" y2="1"><stop offset="0" stopColor="#e7f1fd" /><stop offset="1" stopColor="#7fb0ee" /></linearGradient>
          </defs>
          <circle cx="10" cy="17" r="10" fill="url(#sun)" />
          <path d="M6 29C0.500 29 1 22.500 6 23C7 17 16 16.500 17 22C23 21.500 24 29 18 29Z" fill="url(#cloud)" />
        </I>
        <span className="absolute -top-[1px] left-[9px] flex size-[16px] items-center justify-center rounded-full bg-[#c42b1c] text-[11px] text-white">1</span>
      </div>
      <div className="ml-[4px] flex flex-col leading-[16px]">
        <T w={24}>72°F</T>
        <T w={66} className="text-[#5b5f66]">Partly sunny</T>
      </div>
      <I w={23} h={23} className="ml-[373px]" stroke="none">
        <defs><linearGradient id="win" x1="0" y1="0" x2="1" y2="1"><stop offset="0" stopColor="#43ccfb" /><stop offset="1" stopColor="#0067d1" /></linearGradient></defs>
        <path d="M0 1Q0 0 1 0H11V11H0ZM12 0H22Q23 0 23 1V11H12ZM0 12H11V23H1Q0 23 0 22ZM12 12H23V22Q23 23 22 23H12Z" fill="url(#win)" />
      </I>
      <div className="ml-[13px] flex h-[32px] w-[219px] items-center rounded-full border border-[#c6cad9] border-b-[#b3b7cb] bg-[#f2f4f8]">
        <I w={14} h={15} className="ml-[11px]" stroke="#333" sw={2}><circle cx="6.2" cy="6.5" r="5.3" /><path d="M10 10.5L14 14.5" /></I>
        <T w={41} className="ml-[10px] text-[12.5px] text-[#5f6168]">Search</T>
      </div>
      <I w={24} h={23} className="ml-[13px]" stroke="none">
        <defs><linearGradient id="tv" x1="0" y1="0" x2="0" y2="1"><stop offset="0" stopColor="#444" /><stop offset="1" stopColor="#1c1c1c" /></linearGradient></defs>
        <rect x="0" y="6" width="18" height="16" rx="1.5" fill="url(#tv)" />
        <rect x="6" y="0" width="18" height="16" rx="1.5" fill="#fff" fillOpacity="0.85" />
        <rect x="6" y="6" width="12" height="10" fill="#bcbcbc" />
      </I>
      <I w={23} h={24} className="-mt-px ml-[20px]" stroke="none">
        <path d="M6 7V2.5Q6 1 7.5 1H15.5Q17 1 17 2.5V7" stroke="#24b8f0" strokeWidth="1.8" />
        <path d="M0 5H23V20Q23 24 19 24H4Q0 24 0 20Z" fill="#1b4f8d" />
        <path d="M7 10H11V14H7Z" fill="#f25022" /><path d="M12 10H16V14H12Z" fill="#7fba00" /><path d="M7 15H11V19H7Z" fill="#00a4ef" /><path d="M12 15H16V19H12Z" fill="#ffb900" />
      </I>
      <div className="ml-[22px] flex h-full w-[22px] flex-col items-center">
        <I w={22} h={17} className="mt-[14px]" stroke="none">
          <path d="M0 1Q0 0 1 0H7.5L9.5 2V5H0Z" fill="#f2ab1a" /><path d="M0 3.5H7.5L9.5 2H21Q22 2 22 3V16Q22 17 21 17H1Q0 17 0 16Z" fill="#ffd664" />
        </I>
        <span className="mt-[8px] h-[3px] w-[6px] shrink-0 rounded-full bg-[#7a7f88]" />
      </div>
      <T w={128} className="ml-[9px]">logs-software - File Expl</T>
      <svg width="24" height="24" viewBox="0 0 24 24" className="-mt-px ml-[20px] block shrink-0">
        <defs>
          <linearGradient id="e1" x1="0" y1="0.3" x2="1" y2="0.4"><stop offset="0" stopColor="#1f8fe0" /><stop offset="0.5" stopColor="#2fc3d8" /><stop offset="1" stopColor="#6be35a" /></linearGradient>
          <linearGradient id="e2" x1="0" y1="0" x2="0" y2="1"><stop offset="0" stopColor="#1a86dc" /><stop offset="1" stopColor="#0d57ac" /></linearGradient>
        </defs>
        <circle cx="12" cy="12" r="12" fill="url(#e2)" />
        <path d="M0 12C0 4.5 6 0 12 0C19.5 0 24 5.5 24 11C24 15 21 16.5 18 16.5C15.5 16.5 14 15.5 14.5 14.5C17 11 13.5 7.5 9 7.5C4.5 7.5 1 9.5 0 12Z" fill="url(#e1)" />
        <path d="M10.5 12.5C9.5 17 14 21 20.5 19.5L22.8 17.2C19 18.8 14.5 18.5 14.5 14.5C15.3 12 11.8 10.5 10.5 12.5Z" fill="#d9eaf6" />
      </svg>
      <I w={22} h={16} className="ml-[21px]" stroke="none">
        <path d="M0 0H19L15.5 3.5H6L10 9.5L8 12Z" fill="#2468bd" /><path d="M8.5 7L12 9L21 0.5L22 2L11 16L8 12L10.5 10Z" fill="#1f2630" />
      </I>
      <div className="relative ml-[21px] flex h-full w-[29px] flex-col items-start">
        <svg width="24" height="24" viewBox="0 0 24 24" className="mt-[11px] block">
          <circle cx="12" cy="12" r="12" fill="#fbc116" />
          <path d="M12 12L1.6 6A12 12 0 0 1 22.4 6H12Z" fill="#ea4335" />
          <path d="M1.6 6A12 12 0 0 0 12 24L17.2 15L12 12Z" fill="#2f9e4b" />
          <path d="M22.4 6A12 12 0 0 1 12 24L17.2 15L17 6Z" fill="#fbc116" />
          <circle cx="12" cy="12" r="5.8" fill="#fff" /><circle cx="12" cy="12" r="4.5" fill="#3b79e8" />
        </svg>
        <span className="absolute top-[6px] left-[13px] flex size-[16px] items-center justify-center rounded-full bg-[#8d6e63] text-[9px] font-semibold text-white">M</span>
        <span className="mt-[4px] ml-[9px] h-[3px] w-[6px] shrink-0 rounded-full bg-[#7a7f88]" />
      </div>
      <T w={128} className="ml-[3px]">Eitaa Web - Google Chr<span className="inline-block w-[4px] overflow-hidden align-bottom">o</span></T>
      <div className="ml-[13px] flex h-[38px] w-[154px] items-center rounded bg-[#eaedf6] shadow-[0_0_1px_rgba(0,0,0,0.25)]">
        <div className="ml-[7px] flex h-full w-[24px] flex-col items-center">
          <ExcelIcon s={24} className="mt-[7px]" />
          <span className="mt-[4px] h-[3px] w-[16px] shrink-0 rounded-full bg-[#0078d4]" />
        </div>
        <T w={107} className="ml-[8px]">software.xlsx - Excel</T>
      </div>
      <I w={10} h={6} className="ml-[220px]" stroke="#222" sw={1.3}><path d="M0 5.5L5 0.7L10 5.5" /></I>
      <I w={16} h={12} className="-mt-px ml-[19px]" stroke="#222" sw={1.2}>
        <path d="M4 11C-0.5 11 -0.5 5 3.5 4.5C4.5 0 11 -0.5 12.2 4.2C16.5 4.5 16.5 11 12.5 11Z" fill="#b5b1bd" /><path d="M1.5 0L14.5 12" strokeWidth="1.5" />
      </I>
      <T w={9} dir="rtl" className="ml-[25px] text-[12px]">فا</T>
      <I w={16} h={12} className="-mt-px ml-[25px]" stroke="#222" sw={1.2}>
        <path d="M0.5 4.5C4.5 -0.5 11.5 -0.5 15.5 4.5M2.8 6.8C5.5 3.3 10.5 3.3 13.2 6.8M5.2 9C6.8 7 9.2 7 10.8 9" /><circle cx="8" cy="10.5" r="1.3" fill="#222" stroke="none" />
      </I>
      <I w={16} h={12} className="-mt-px ml-[8px]" stroke="#222" sw={1.2}>
        <path d="M0.6 4V8H3L6.5 11.5V0.5L3 4ZM9 3.8Q10.5 6 9 8.2M11 2Q13.5 6 11 10M13 0.5Q17 6 13 11.5" />
      </I>
      <I w={16} h={13} className="-mt-[2px] ml-[8px]" stroke="#222" sw={1.2}>
        <rect x="1" y="3.5" width="12.5" height="8" rx="1.5" /><rect x="3" y="5.5" width="8.5" height="4" fill="#222" stroke="none" /><path d="M15 6V9" strokeWidth="1.8" /><path d="M3 0L0.5 4.5H3L2 8L5.5 3H3.3L4.5 0Z" fill="#222" stroke="none" />
      </I>
      <div className="mr-[19px] ml-auto flex flex-col items-end leading-[16px]">
        <T w={50}>11:45 PM</T>
        <T w={56}>6/24/2025</T>
      </div>
    </footer>
  );
}

export default function App() {
  return (
    <main className="flex h-[1080px] w-[1920px] flex-col overflow-hidden bg-[linear-gradient(100deg,#e5e5eb_0%,#e6e5eb_35%,#ebe4eb_60%,#ebe4eb_85%,#e5e4ea_100%)] font-['Noto_Sans',sans-serif] text-[12px]">
      <TitleBar />
      <TabBar />
      <Ribbon />
      <FormulaBar />
      <div className="mt-[7px] flex flex-col">
        <Sheet />
        <SheetTabs />
        <StatusBar />
        <Taskbar />
      </div>
    </main>
  );
}
